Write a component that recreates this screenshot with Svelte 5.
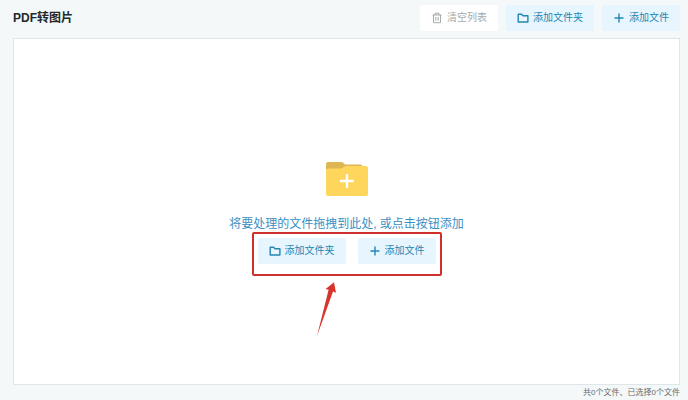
<script>
	let files = $state([]);
	let selected = $derived(files.filter((file) => file.selected));

	function clearList() {
		files = [];
	}

	function addFiles() {
		files.push({ name: `${files.length + 1}.pdf`, selected: false });
	}
</script>

{#snippet folderIcon()}
	<svg class="icon" viewBox="0 0 12 12" aria-hidden="true">
		<path d="M1.2 2.2h3.4l1.4 1.500h4.900v6.300H1.2z" />
	</svg>
{/snippet}

{#snippet plusIcon()}
	<svg class="icon" viewBox="0 0 12 12" aria-hidden="true">
		<path d="M6 1.500v9M1.500 6h9" />
	</svg>
{/snippet}

<main class="page">
	<header class="toolbar">
		<h1>PDF转图片</h1>
		<div class="actions">
			<button class="btn muted" type="button" onclick={clearList}>
				<svg class="icon thin" viewBox="0 0 12 12" aria-hidden="true">
					<path d="M1.500 3h9M4 3V1.300h4V3M2.500 3v7.700h7V3M4.800 5v3.800M7.200 5v3.800" />
				</svg>
				清空列表
			</button>
			<button class="btn" type="button" onclick={addFiles}>{@render folderIcon()}添加文件夹</button>
			<button class="btn" type="button" onclick={addFiles}>{@render plusIcon()}添加文件</button>
		</div>
	</header>

	<section class="drop-zone">
		<svg class="folder" viewBox="0 0 42 35" aria-hidden="true">
			<path fill="#deb654" d="M0 3a2 2 0 0 1 2-2h13q1.500 0 2.500 1l1.500 1.500h15.500a2 2 0 0 1 2 2V12H0z" />
			<path fill="#fdd65b" d="M0 9.500a2 2 0 0 1 2-2h12.500q1.500 0 2.500-1l1-.800q.800-.700 2-.700h20a2 2 0 0 1 2 2v26a2 2 0 0 1-2 2H2a2 2 0 0 1-2-2z" />
			<path fill="none" stroke="#fff" stroke-width="2.400" d="M21 13v14M14 20h14" />
		</svg>
		<p>将要处理的文件拖拽到此处, 或点击按钮添加</p>
		<div class="choices">
			<button class="btn" type="button" onclick={addFiles}>{@render folderIcon()}添加文件夹</button>
			<button class="btn" type="button" onclick={addFiles}>{@render plusIcon()}添加文件</button>
			<svg class="arrow" viewBox="0 0 22 56" aria-hidden="true">
				<path fill="#d8342c" d="M1 55 12.600 8.700 9.600 8 18 1.200 20 11.800 17 10.600Z" />
			</svg>
		</div>
	</section>

	<footer>共{files.length}个文件、已选择{selected.length}个文件</footer>
</main>

<style>
	:global(body) {
		margin: 0;
		background: #f4f8f9;
	}

	.page {
		display: flex;
		flex-direction: column;
		box-sizing: border-box;
		min-height: 100vh;
		padding: 5px 8px 0 13px;
		color: #22282b;
		font-family: 'Liberation Sans', 'Noto Sans CJK SC', sans-serif;
	}

	.toolbar {
		display: flex;
		align-items: center;
		justify-content: space-between;
		margin-bottom: 7px;
	}

	h1 {
		margin: 0;
		font-size: 12px;
		font-weight: 700;
		line-height: 16px;
	}

	.actions {
		display: flex;
		gap: 8px;
	}

	.btn {
		display: flex;
		align-items: center;
		gap: 4px;
		height: 26px;
		padding: 0 11px;
		border: 0;
		border-radius: 2px;
		background: #e7f5fe;
		color: #2486b3;
		font-family: inherit;
		font-size: 10px;
		line-height: 16px;
		white-space: nowrap;
		cursor: pointer;
	}

	.btn.muted {
		background: #ffffff;
		color: #a5aaac;
	}

	.icon {
		width: 12px;
		height: 12px;
		fill: none;
		stroke: currentColor;
		stroke-width: 1.4;
		stroke-linejoin: round;
	}

	.icon.thin {
		stroke-width: 1;
	}

	.drop-zone {
		display: flex;
		flex: 1;
		flex-direction: column;
		align-items: center;
		justify-content: center;
		padding-top: 2px;
		border: 1px solid #dfe6e9;
		background: #ffffff;
	}

	.folder {
		width: 42px;
		height: 35px;
	}

	p {
		margin: 20px 0 6px;
		color: #3a8fc2;
		font-size: 12px;
		line-height: 16px;
	}

	.choices {
		position: relative;
		display: flex;
		gap: 12px;
	}

	/* red frame around the two buttons */
	.choices::before {
		position: absolute;
		inset: -6px -6px -12px;
		border: 2px solid #d0302b;
		border-radius: 2px;
		content: '';
		pointer-events: none;
	}

	.arrow {
		position: absolute;
		top: 43px;
		left: 58px;
		width: 22px;
		height: 56px;
		pointer-events: none;
	}

	footer {
		color: #666c6f;
		font-size: 8px;
		line-height: 15px;
		text-align: right;
	}
</style>
